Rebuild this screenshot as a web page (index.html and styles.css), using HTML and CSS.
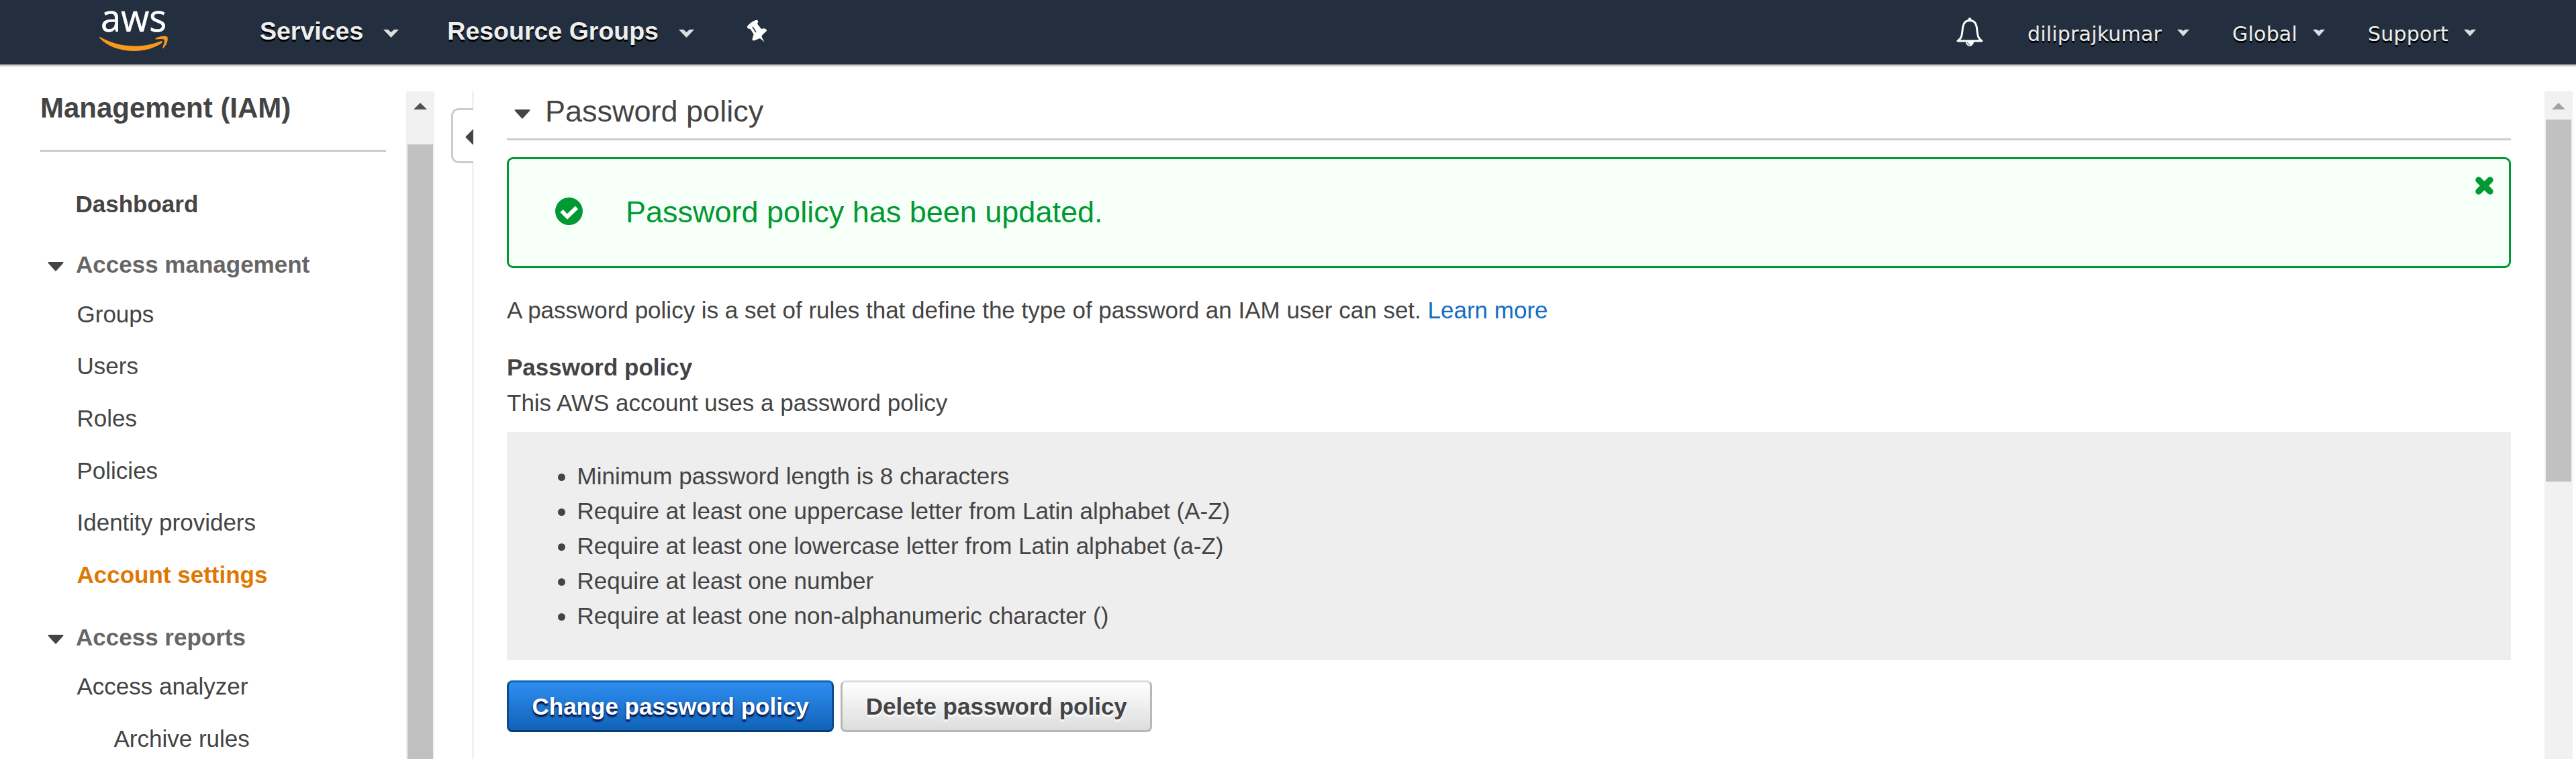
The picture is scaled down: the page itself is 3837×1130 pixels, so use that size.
FILE: index.html
```html
<!DOCTYPE html>
<html lang="en">
<head>
<meta charset="utf-8">
<title>IAM Management Console</title>
<link rel="stylesheet" href="styles.css">
</head>
<body>
<header class="topbar">
  <svg class="logo" viewBox="147 0 104 80" width="104" height="80"><text class="logo-text" x="150" y="47" textLength="98" lengthAdjust="spacingAndGlyphs">aws</text><path fill="#f8981d" d="M148 56C160 70 180 76 200 76C216 76 232 71 241 64C243 62 242 60.500 239 61.500C227 66 214 68.500 202 68.500C182 68.500 165 64 150 55.500C148 54.500 147.500 55 148 56Z"/><path fill="#f8981d" d="M231.500 57.500C236 53.500 246 53 249 54.500C251 57 249.500 66 243.500 71.500C242.500 72.500 241.500 72 242 71C244 66 246 61 244.500 59C242.500 57.500 237 58 232.500 58.500C231 58.700 231 58 231.500 57.500Z"/></svg>
  <nav class="menu-left">
    <a class="menu">Services</a><svg class="caret" viewBox="0 0 23 12" width="23" height="12"><path d="M0 0h7l4.500 4L16 0h7L11.500 12z"/></svg>
    <a class="menu second">Resource Groups</a><svg class="caret" viewBox="0 0 23 12" width="23" height="12"><path d="M0 0h7l4.500 4L16 0h7L11.500 12z"/></svg>
    <svg class="pin" viewBox="0 0 30 34" width="30" height="34"><path d="M0 10Q6 3 14 .5Q16 1 16.300 3.500L15 6.500L21 14L25 13.300Q29 14 29 17L22 23.600L21.500 26L25.600 33.600L19 28L10 31.500Q7 31.500 7.600 29L9.600 22L4.600 14L1 13.500Q0 12 0 10Z"/><path d="M8 11l5 8" stroke="#232f3e" stroke-width="1.500"/></svg>
  </nav>
  <nav class="menu-right">
    <svg class="bell" viewBox="0 0 40 44" width="40" height="44"><path fill="none" stroke="#fff" stroke-width="3" stroke-linejoin="round" d="M2 35h36c-8-5-6-13-8-22C29 8 26 4.500 20 4.500S11 8 10 13C8 22 10 30 2 35z"/><path fill="#fff" d="M17.500 4C17 -1 23 -1 22.500 4zM14 36h12c-.5 9-11.500 9-12 0z"/><path fill="none" stroke="#232f3e" d="M16.500 37q.5 3 3.500 4"/></svg>
    <a class="user">diliprajkumar</a><svg class="tri" viewBox="0 0 18 10" width="18" height="10"><path d="M0 0h6l3 2 3-2h6L9 10z"/></svg>
    <a class="user region">Global</a><svg class="tri" viewBox="0 0 18 10" width="18" height="10"><path d="M0 0h6l3 2 3-2h6L9 10z"/></svg>
    <a class="user support">Support</a><svg class="tri" viewBox="0 0 18 10" width="18" height="10"><path d="M0 0h6l3 2 3-2h6L9 10z"/></svg>
  </nav>
</header>
<div class="shell">
  <aside class="sidebar">
    <h2 class="side-title">Management (IAM)</h2>
    <ul class="nav">
      <li class="dash">Dashboard</li>
      <li class="group"><svg class="arrow" viewBox="0 0 24 14" width="24" height="14"><path d="M1 0h22q1 1 0 2L13 13q-1 1-2 0L1 2q-1-1 0-2z"/></svg>Access management</li>
      <li>Groups</li><li>Users</li><li>Roles</li><li>Policies</li><li>Identity providers</li><li class="active">Account settings</li>
      <li class="group reports"><svg class="arrow" viewBox="0 0 24 14" width="24" height="14"><path d="M1 0h22q1 1 0 2L13 13q-1 1-2 0L1 2q-1-1 0-2z"/></svg>Access reports</li>
      <li>Access analyzer</li><li class="sub">Archive rules</li>
    </ul>
  </aside>
  <div class="scroll side-scroll"><i class="up"></i><div class="thumb"></div></div>
  <div class="gutter"><div class="tab"><svg viewBox="0 0 12 24" width="12" height="24"><path d="M12 0v24L1 13q-1-1 0-2z"/></svg></div></div>
  <main class="main">
    <h1 class="title"><svg class="arrow" viewBox="0 0 24 14" width="24" height="14"><path d="M1 0h22q1 1 0 2L13 13q-1 1-2 0L1 2q-1-1 0-2z"/></svg>Password policy</h1>
    <div class="alert">
      <svg class="ok" viewBox="0 0 41 41" width="41" height="41"><circle cx="20.500" cy="20.500" r="20.500"/><path d="M9.500 20l8.500 8.500L32 15" fill="none" stroke="#fff" stroke-width="6"/></svg>
      <span class="alert-text">Password policy has been updated.</span>
      <svg class="close" viewBox="0 0 27 27" width="27" height="27"><path d="M5 5l17 17M22 5L5 22" stroke="#093" stroke-width="9.500" stroke-linecap="round"/></svg>
    </div>
    <p class="intro">A password policy is a set of rules that define the type of password an IAM user can set. <a class="link">Learn more</a></p>
    <h3 class="subhead">Password policy</h3>
    <p class="state">This AWS account uses a password policy</p>
    <ul class="rules">
      <li>Minimum password length is 8 characters</li>
      <li>Require at least one uppercase letter from Latin alphabet (A-Z)</li>
      <li>Require at least one lowercase letter from Latin alphabet (a-Z)</li>
      <li>Require at least one number</li>
      <li>Require at least one non-alphanumeric character ()</li>
    </ul>
    <div class="actions"><button class="btn primary">Change password policy</button><button class="btn">Delete password policy</button></div>
  </main>
  <div class="scroll main-scroll"><i class="up"></i><div class="thumb"></div></div>
</div>
</body>
</html>
```

FILE: styles.css
```css
* { box-sizing: border-box; margin: 0; padding: 0; }
body { height: 1130px; overflow: hidden; background: #fff; color: #444; font: 35px/52px "Liberation Sans", Arial, sans-serif; }
svg { display: block; flex: none; }
ul { list-style: none; }
.topbar { display: flex; height: 99px; background: #232f3e; border-bottom: 3px solid #ccc; }
.logo { margin-left: 147px; overflow: visible; }
.logo-text { font: 500 57px "Open Sans", sans-serif; fill: #fff; stroke: #fff; stroke-width: .6px; }
.menu-left { display: flex; align-items: flex-start; margin-left: 136px; }
.menu { font-size: 37.5px; font-weight: bold; line-height: 44px; margin-top: 24px; color: #eee; text-shadow: 0 3px 0 #000; }
.caret { fill: #ddd; margin: 44px 0 0 30px; }
.second { margin-left: 72px; }
.pin { fill: #fff; margin: 29px 0 0 79px; }
.menu-right { display: flex; align-items: flex-start; margin-left: auto; padding-right: 149px; }
.bell { margin: 26px 66px 0 0; }
.user { font: 30px/44px "DejaVu Sans", Verdana, sans-serif; letter-spacing: .2px; margin-top: 29px; color: #eee; text-shadow: 0 3px 0 #000; }
.tri { fill: #ddd; margin: 44px 0 0 23px; }
.region { margin-left: 64px; }
.support { margin-left: 64px; }
.shell { display: flex; height: 994px; margin-top: 37px; }
.sidebar { width: 605px; padding: 0 30px 0 60px; }
.side-title { height: 90px; font-size: 42px; line-height: 50px; border-bottom: 3px solid #ccc; }
.nav { padding-top: 52px; }
.nav li { display: flex; align-items: center; height: 77.6px; padding-left: 54.5px; }
.nav .dash { height: 52px; font-weight: bold; padding-left: 52.5px; }
.nav .group { height: 52px; font-weight: bold; color: #666; padding-left: 11px; margin: 38px 0 9px; }
.nav .reports { margin: 28px 0 9px; }
.group .arrow { margin: 6px 18px 0 0; }
.arrow { fill: #444; }
.nav .active { font-weight: bold; color: #e07700; }
.nav .sub { padding-left: 109.5px; }
.scroll { display: flex; flex-direction: column; align-items: center; width: 42px; background: #f1f1f1; }
.up { height: 10px; border: 10px solid transparent; border-bottom-color: #505050; border-top: 0; margin-top: 17px; }
.thumb { width: 38px; background: #c1c1c1; }
.side-scroll .thumb { margin-top: 52px; height: 915px; }
.main-scroll { margin-left: 50px; }
.main-scroll .up { border-bottom-color: #a3a3a3; }
.main-scroll .thumb { margin-top: 15px; height: 539px; }
.gutter { width: 58px; padding: 25px 0 0 25px; border-right: 1px solid #ccc; }
.tab { display: flex; align-items: center; justify-content: flex-end; width: 33px; height: 82px; margin-right: -1px; padding-top: 4px; background: #fff; border: 3px solid #ccc; border-right: 0; border-radius: 11px 0 0 11px; fill: #444; }
.main { width: 2985px; margin-left: 50px; }
.title { display: flex; align-items: center; height: 73px; padding: 0 0 11px 11px; font-size: 45px; font-weight: normal; border-bottom: 3px solid #ccc; }
.title .arrow { margin: 8px 22px 0 0; }
.alert { display: flex; align-items: center; height: 165px; margin-top: 25px; padding: 0 23px 0 69px; border: 3px solid #093; border-radius: 9px; background: #f6fff8; color: #093; font-size: 45px; }
.ok { fill: #093; margin: 0 64px 4px 0; }
.alert-text { margin-bottom: 2px; }
.close { margin: 0 0 81px auto; }
.intro { margin-top: 37px; }
.link { color: #166dc4; }
.subhead { font-size: 35px; margin-top: 33px; }
.state { margin-top: 1px; }
.rules { height: 340px; margin-top: 17px; padding: 40px 0 0 76px; background: #eee; }
.rules li { display: flex; align-items: center; }
.rules li::before { content: ""; width: 11px; height: 11px; margin: 3px 17.5px 0 0; border-radius: 50%; background: #444; }
.actions { display: flex; gap: 10px; margin-top: 30px; }
.btn { height: 77px; padding: 0 34.5px; font: bold 35px/50px "Liberation Sans", Arial, sans-serif; color: #444; text-shadow: 0 3px 3px #fff; background: linear-gradient(#fff, #ddd); border: 3px solid #b8b8b8; border-top-color: #ddd; border-radius: 8px; }
.primary { color: #fff; text-shadow: 0 3px 3px #003; background: linear-gradient(#2e8df0, #1163b8); border-color: #1166bb #0d4a8b #083c74; }
```
